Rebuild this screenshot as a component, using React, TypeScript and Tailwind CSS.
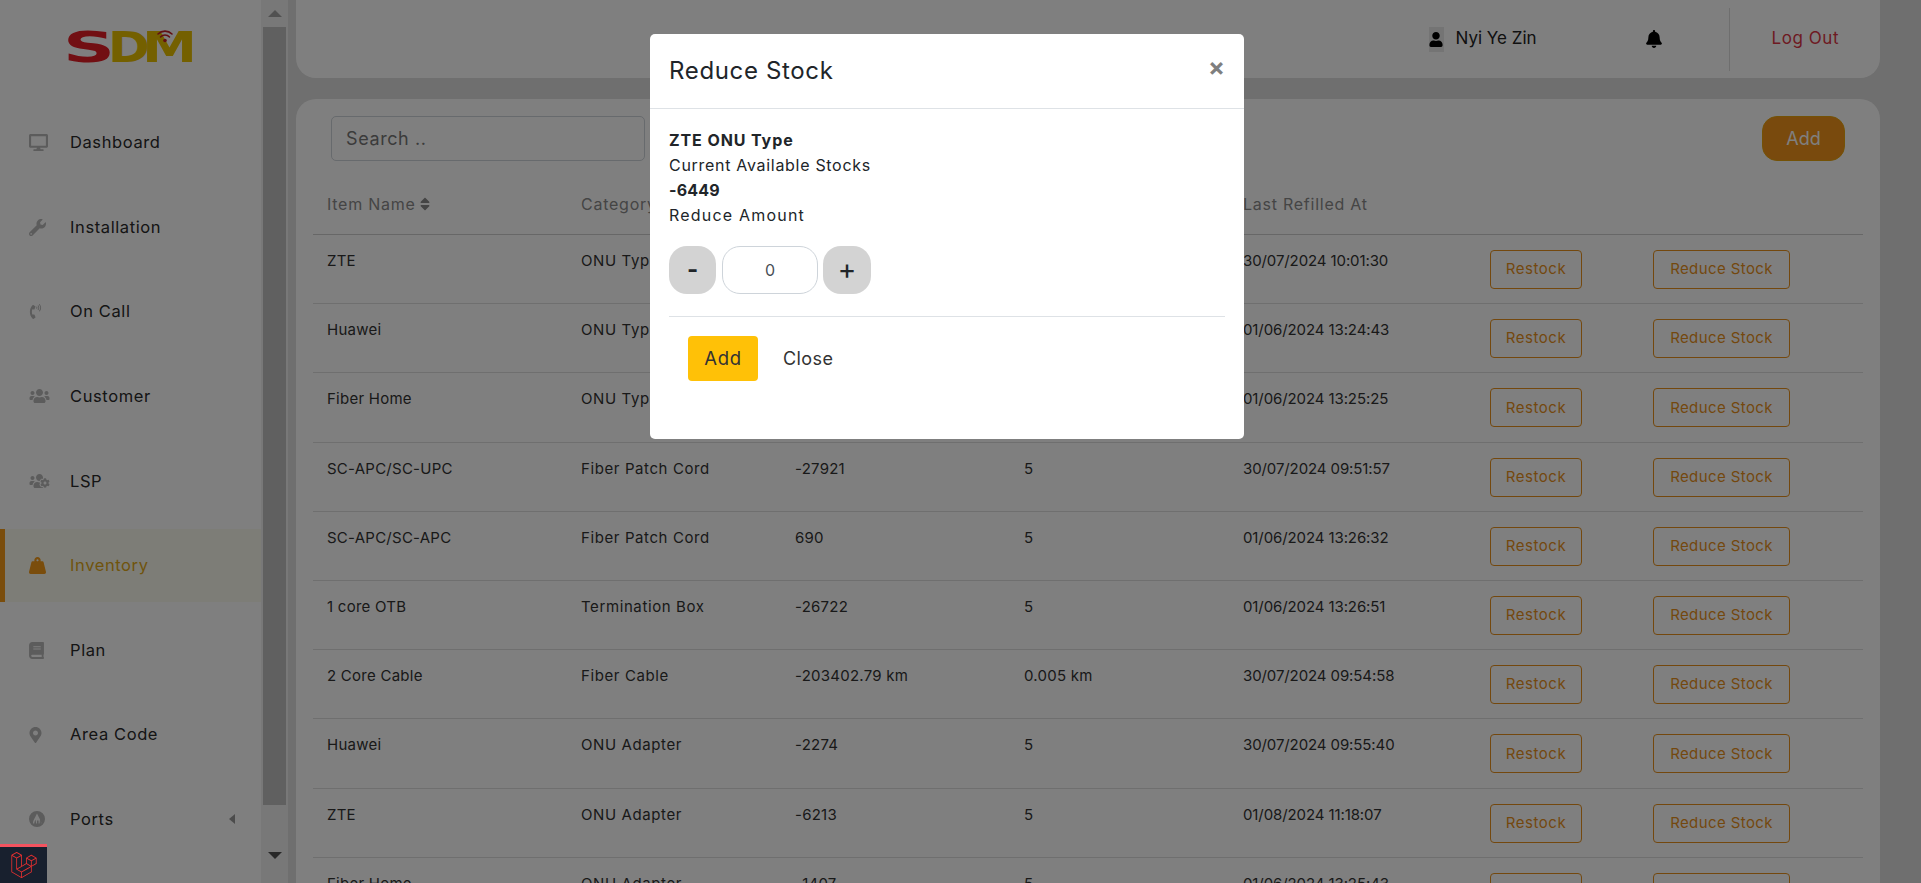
import React from 'react';
import {
  FaBell,
  FaBook,
  FaDesktop,
  FaLaravel,
  FaMapMarkerAlt,
  FaPhoneVolume,
  FaSort,
  FaUser,
  FaUsers,
  FaUsersCog,
  FaWeightHanging,
  FaWrench,
} from 'react-icons/fa';

const font = "font-['Inter','Liberation_Sans',sans-serif]";

const PortsIcon = () => (
  <svg viewBox="0 0 16 16" className="h-[16px] w-[16px]" fill="currentColor">
    <path
      fillRule="evenodd"
      d="M8 0a8 8 0 1 1 0 16A8 8 0 0 1 8 0zm0 2.4L6 6.6c-.4.9-.9 1.6-1.4 2.6-.5 1-.6 2-.6 3.3h1.3c0-1.1.2-1.9.7-2.8l.6-1.2.5 4h.9V9.4h1.6v3.1h.9l.5-4 .6 1.2c.5.9.7 1.7.7 2.8H12c0-1.3-.1-2.3-.6-3.3-.5-1-1-1.7-1.4-2.6L8 2.4z"
    />
  </svg>
);

const navItems = [
  { label: 'Dashboard', icon: <FaDesktop className="h-[17px] w-[19px]" /> },
  { label: 'Installation', icon: <FaWrench className="h-[17px] w-[17px]" /> },
  { label: 'On Call', icon: <FaPhoneVolume className="h-[15px] w-[13px]" /> },
  { label: 'Customer', icon: <FaUsers className="h-[16px] w-[21px]" /> },
  { label: 'LSP', icon: <FaUsersCog className="h-[16px] w-[21px]" /> },
  { label: 'Inventory', icon: <FaWeightHanging className="h-[17px] w-[17px]" />, active: true },
  { label: 'Plan', icon: <FaBook className="h-[17px] w-[15px]" /> },
  { label: 'Area Code', icon: <FaMapMarkerAlt className="h-[16px] w-[13px]" /> },
  { label: 'Ports', icon: <PortsIcon />, caret: true },
];

const rows = [
  ['ZTE', 'ONU Type', '-6449', '5', '30/07/2024 10:01:30'],
  ['Huawei', 'ONU Type', '-3120', '5', '01/06/2024 13:24:43'],
  ['Fiber Home', 'ONU Type', '-1407', '5', '01/06/2024 13:25:25'],
  ['SC-APC/SC-UPC', 'Fiber Patch Cord', '-27921', '5', '30/07/2024 09:51:57'],
  ['SC-APC/SC-APC', 'Fiber Patch Cord', '690', '5', '01/06/2024 13:26:32'],
  ['1 core OTB', 'Termination Box', '-26722', '5', '01/06/2024 13:26:51'],
  ['2 Core Cable', 'Fiber Cable', '-203402.79 km', '0.005 km', '30/07/2024 09:54:58'],
  ['Huawei', 'ONU Adapter', '-2274', '5', '30/07/2024 09:55:40'],
  ['ZTE', 'ONU Adapter', '-6213', '5', '01/08/2024 11:18:07'],
  ['Fiber Home', 'ONU Adapter', '-1407', '5', '01/06/2024 13:25:43'],
];

const gridCols = 'grid grid-cols-[254px_214px_229px_219px_247px_163px_224px]';

const Sidebar = () => (
  <aside className="flex h-full w-[261px] shrink-0 flex-col bg-white">
    <div className="flex h-[84px] items-start pl-[67px] pt-[29px]">
      <svg viewBox="0 0 126 34" className="h-[34px] w-[126px] overflow-visible">
        <text
          x="-4"
          y="33"
          textLength="52"
          lengthAdjust="spacingAndGlyphs"
          fontFamily="DejaVu Sans"
          fontWeight="700"
          fontSize="43"
          fill="#e41e26"
        >
          S
        </text>
        <text
          x="41"
          y="33"
          textLength="42"
          lengthAdjust="spacingAndGlyphs"
          fontFamily="DejaVu Sans"
          fontWeight="700"
          fontSize="43"
          fill="#e8c000"
        >
          D
        </text>
        <text
          x="75"
          y="33"
          textLength="55"
          lengthAdjust="spacingAndGlyphs"
          fontFamily="DejaVu Sans"
          fontWeight="700"
          fontSize="43"
          fill="#e8c000"
        >
          M
        </text>
        <g fill="none" stroke="#c41e26" strokeWidth="1.6" strokeLinecap="round">
          <path d="M91 5a10 10 0 0 1 14 0" />
          <path d="M93.5 8a6 6 0 0 1 9 0" />
        </g>
        <circle cx="98" cy="11.5" r="1.8" fill="#c41e26" />
      </svg>
    </div>
    <nav className="flex flex-col gap-[11.6px] pt-[22px]">
      {navItems.map((item) => (
        <div
          key={item.label}
          className={`flex h-[73px] items-center border-l-[5px] pl-[24px] text-[16.5px] tracking-[0.6px] ${
            item.active
              ? 'border-[#f49a18] bg-[#fbfbee] text-[#e0a818]'
              : 'border-transparent text-[#2a2a2a]'
          }`}
        >
          <span
            className={`flex w-[41px] shrink-0 items-center ${
              item.active ? 'text-[#f49a18]' : 'text-[#b8b8b8]'
            }`}
          >
            {item.icon}
          </span>
          <span>{item.label}</span>
          {item.caret && (
            <span className="ml-auto mr-[26px] h-0 w-0 border-y-[5px] border-r-[6px] border-y-transparent border-r-[#999]" />
          )}
        </div>
      ))}
    </nav>
  </aside>
);

const Scrollbar = () => (
  <div className="flex h-full w-[27px] shrink-0 flex-col items-center bg-[#f1f1f1]">
    <div className="flex h-[27px] items-center">
      <span className="h-0 w-0 border-x-[7px] border-b-[7px] border-x-transparent border-b-[#a3a3a3]" />
    </div>
    <div className="h-[778px] w-[23px] bg-[#c1c1c1]" />
    <div className="flex flex-1 items-center pt-[22px]">
      <span className="h-0 w-0 border-x-[7px] border-t-[7px] border-x-transparent border-t-[#505050]" />
    </div>
  </div>
);

const Header = () => (
  <header className="flex h-[78px] shrink-0 items-center justify-end rounded-b-[20px] bg-white pr-[41px]">
    <div className="flex h-[25px] w-[15px] items-center justify-center bg-[#e8e8e8] text-black">
      <FaUser className="h-[15px] w-[14px]" />
    </div>
    <span className="ml-[12px] w-[190px] text-[17px] text-[#222]">Nyi Ye Zin</span>
    <FaBell className="h-[18px] w-[16px] text-black" />
    <div className="ml-[67px] h-[63px] w-px bg-[#ddd]" />
    <span className="ml-[42px] text-[17px] text-[#dc3545] tracking-[0.55px]">Log Out</span>
  </header>
);

const StockTable = () => (
  <section className="mt-[21px] flex-1 rounded-t-[20px] bg-white px-[17px]">
    <div className="flex items-start justify-between pl-[18px] pr-[18px] pt-[17px]">
      <div className="flex h-[45px] w-[314px] items-center rounded-[5px] border border-[#ced4da] pl-[14px] text-[18px] text-[#777] tracking-[0.6px]">
        Search ..
      </div>
      <button className="h-[45px] w-[83px] rounded-[15px] border border-[#e9a50c] bg-[#f2941a] text-[18px] text-white">
        Add
      </button>
    </div>
    <div className={`${gridCols} h-[74px] items-end border-b border-[#cfcfcf] pb-[18px] pl-[14px] text-[16px] text-[#8a8a8a] tracking-[0.75px]`}>
      <div className="flex items-center gap-[4px]">
        Item Name <FaSort className="h-[16px] w-[10px]" />
      </div>
      <div>Category</div>
      <div>Available Stocks</div>
      <div>Alert Amount</div>
      <div>Last Refilled At</div>
      <div />
      <div />
    </div>
    {rows.map((row, i) => (
      <div
        key={i}
        className={`${gridCols} h-[69.2px] border-b border-[#dedede] pl-[14px] pt-[15px] text-[15px] text-[#333] tracking-[0.25px]`}
      >
        <div className="whitespace-nowrap">{row[0]}</div>
        <div className="whitespace-nowrap tracking-[0.6px]">{row[1]}</div>
        <div className="whitespace-nowrap">{row[2]}</div>
        <div className="whitespace-nowrap">{row[3]}</div>
        <div className="whitespace-nowrap tracking-[-0.1px]">{row[4]}</div>
        <div>
          <button className="h-[39px] w-[92px] rounded-[4px] border border-[#e8911c] text-[15px] tracking-[0.55px] text-[#e8911c]">
            Restock
          </button>
        </div>
        <div>
          <button className="h-[39px] w-[137px] rounded-[4px] border border-[#e8911c] text-[15px] tracking-[0.4px] text-[#e8911c]">
            Reduce Stock
          </button>
        </div>
      </div>
    ))}
  </section>
);

const ReduceStockModal = () => (
  <div className="fixed inset-0 bg-black/50">
    <div className="ml-[650px] mt-[34px] h-[405px] w-[594px] rounded-[5px] bg-white text-[#212529]">
      <div className="flex h-[75px] items-start justify-between border-b border-[#dee2e6] px-[19px]">
        <h5 className="pt-[21px] text-[24px] leading-[32px] tracking-[0.65px]">Reduce Stock</h5>
        <span className="pt-[18px] text-[25px] font-bold leading-[30px] text-[#7f7f7f]">×</span>
      </div>
      <div className="px-[19px] pt-[19px] text-[16px] leading-[25px]">
        <div className="font-bold tracking-[0.9px]">ZTE ONU Type</div>
        <div className="tracking-[0.7px]">Current Available Stocks</div>
        <div className="font-bold tracking-[0.2px]">-6449</div>
        <div className="tracking-[1.2px]">Reduce Amount</div>
        <div className="mt-[18px] flex">
          <button className="h-[48px] w-[47px] rounded-[18px] bg-[#d3d3d3] pb-[2px] text-[24px] font-bold">-</button>
          <div className="ml-[6px] flex h-[48px] w-[96px] items-center justify-center rounded-[18px] border border-[#ced4da] text-[#495057]">
            0
          </div>
          <button className="ml-[5px] h-[48px] w-[48px] rounded-[18px] bg-[#d3d3d3] pb-[2px] text-[28px]">+</button>
        </div>
        <div className="mt-[22px] h-px bg-[#dee2e6]" />
        <div className="mt-[19px] flex items-center pl-[19px] text-[18px] tracking-[0.4px]">
          <button className="h-[45px] w-[70px] rounded-[4px] bg-[#ffc107] text-[18.5px] tracking-[0.7px] text-[#333]">Add</button>
          <span className="ml-[25px] text-[#333]">Close</span>
        </div>
      </div>
    </div>
  </div>
);

export default function App() {
  return (
    <div className={`${font} flex h-[883px] w-full overflow-hidden bg-[#dedede]`}>
      <Sidebar />
      <Scrollbar />
      <main className="ml-[8px] mr-[41px] flex h-full flex-1 flex-col overflow-hidden">
        <Header />
        <StockTable />
      </main>
      <ReduceStockModal />
      <div className="fixed bottom-0 left-0 flex h-[39px] w-[47px] items-center justify-center border-t-[3px] border-[#f4535f] bg-[#18202e] text-[#e83030]">
        <FaLaravel className="h-[26px] w-[26px]" />
      </div>
    </div>
  );
}
